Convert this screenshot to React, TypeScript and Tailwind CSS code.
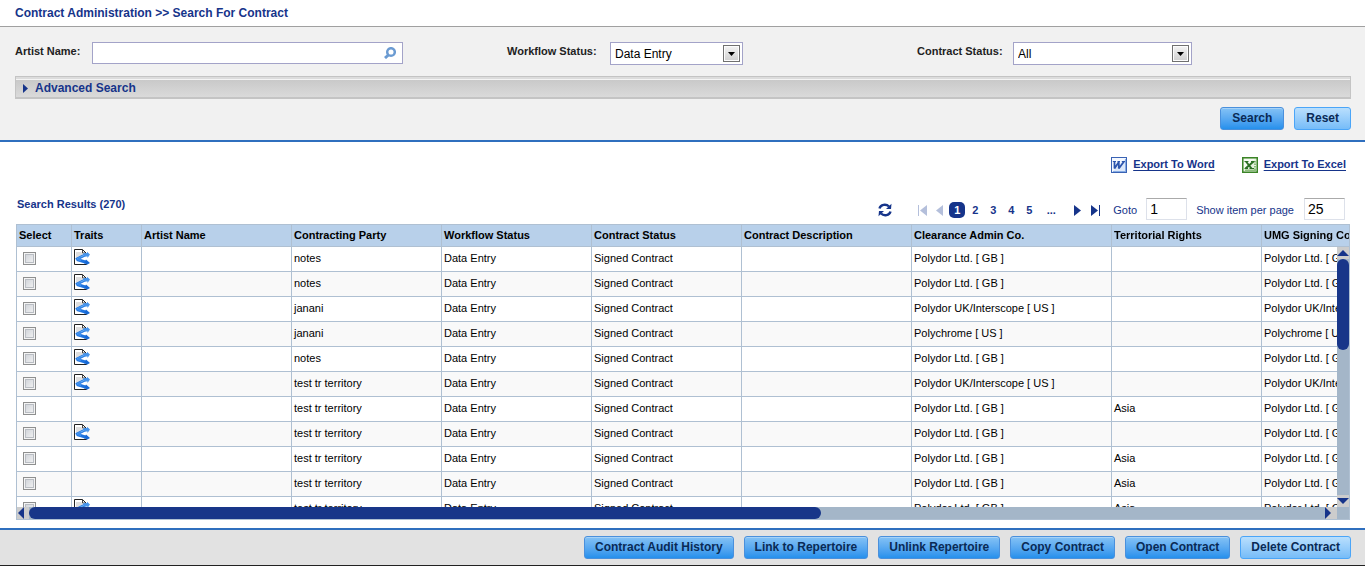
import React from "react";

type Row = {
  traits: boolean;
  party: string;
  admin: string;
  territory: string;
};

const rows: Row[] = [
  { traits: true, party: "notes", admin: "Polydor Ltd. [ GB ]", territory: "" },
  { traits: true, party: "notes", admin: "Polydor Ltd. [ GB ]", territory: "" },
  { traits: true, party: "janani", admin: "Polydor UK/Interscope [ US ]", territory: "" },
  { traits: true, party: "janani", admin: "Polychrome [ US ]", territory: "" },
  { traits: true, party: "notes", admin: "Polydor Ltd. [ GB ]", territory: "" },
  { traits: true, party: "test tr territory", admin: "Polydor UK/Interscope [ US ]", territory: "" },
  { traits: false, party: "test tr territory", admin: "Polydor Ltd. [ GB ]", territory: "Asia" },
  { traits: true, party: "test tr territory", admin: "Polydor Ltd. [ GB ]", territory: "" },
  { traits: false, party: "test tr territory", admin: "Polydor Ltd. [ GB ]", territory: "Asia" },
  { traits: false, party: "test tr territory", admin: "Polydor Ltd. [ GB ]", territory: "Asia" },
  { traits: true, party: "test tr territory", admin: "Polydor Ltd. [ GB ]", territory: "Asia" },
];

const columns = [
  { title: "Select", width: "w-[55px]" },
  { title: "Traits", width: "w-[70px]" },
  { title: "Artist Name", width: "w-[150px]" },
  { title: "Contracting Party", width: "w-[150px]" },
  { title: "Workflow Status", width: "w-[150px]" },
  { title: "Contract Status", width: "w-[150px]" },
  { title: "Contract Description", width: "w-[170px]" },
  { title: "Clearance Admin Co.", width: "w-[200px]" },
  { title: "Territorial Rights", width: "w-[150px]" },
  { title: "UMG Signing Company", width: "w-[200px]" },
];

function TraitsIcon() {
  return (
    <svg width="16" height="16" viewBox="0 0 16 16" className="block">
      <path d="M.5 .5H8.5L12.5 4.5V15.5H.5Z" fill="#fff" />
      <path d="M2 3H7L9 5L2 11Z" fill="#dedede" />
      <path d="M12.5 14V15.5H.5V.5H8.5L12 4" fill="none" stroke="#222" />
      <path d="M8.5 .5V4H11" fill="none" stroke="#444" />
      <path d="M2 10.5L12 5.5M3 10.5L13 13.5" fill="none" stroke="#1e74e0" strokeWidth="3" />
      <path d="M3 10L12 5.3" fill="none" stroke="#67adf3" strokeWidth="1.2" />
      <path d="M9.5 4H13V2.8L16 5.5L13.5 9V7.5H10Z" fill="#4794ea" />
      <path d="M12 10.5L16 14L12.5 16V14.5H10Z" fill="#1668d6" />
      <path d="M1.5 10.5L7 7.5V12.5Z" fill="#3b8cec" />
    </svg>
  );
}

function WordIcon() {
  return (
    <svg width="16" height="16" viewBox="0 0 16 16" className="block">
      <rect x=".5" y=".5" width="15" height="15" fill="#dce8fa" stroke="#3a63b4" />
      <path d="M1 1H15L1 15Z" fill="#f5f9ff" />
      <path d="M14 2H15V15H2V14H14Z" fill="#86abe4" />
      <path d="M3.5 4.5V11.5L7.8 5V11.5L13 4.5" fill="none" stroke="#2c55ad" strokeWidth="1.8" strokeLinejoin="bevel" />
      <path d="M1.8 4.5H5M6.5 4.5H9M10.8 4.5H14" stroke="#2c55ad" strokeWidth="1.2" />
    </svg>
  );
}

function ExcelIcon() {
  return (
    <svg width="16" height="16" viewBox="0 0 16 16" className="block">
      <rect x=".75" y=".75" width="14.5" height="14.5" fill="#e4f0dd" stroke="#3b8427" strokeWidth="1.5" />
      <path d="M2 2H13L2 13Z" fill="#f7fbf4" />
      <path d="M12 4H14V14H3V12.5H12Z" fill="#8dbd7d" />
      <path d="M11.5 6H14M11.5 8.5H14M11.5 11H14" stroke="#e6f2df" />
      <path d="M4 4.5L9.5 11.5M11.5 4.5L3.5 11.5" stroke="#2c6f24" strokeWidth="2" />
      <path d="M2.5 4.5H6.5M9 4.5H12.5M2.5 11.5H6M7.5 11.5H12" stroke="#2c6f24" />
    </svg>
  );
}

function RefreshIcon() {
  return (
    <svg width="14" height="14" viewBox="0 0 14 14" className="block">
      <path d="M1.5 5.5C2.5 1.5 8 .5 11 3.5" fill="none" stroke="#16348a" strokeWidth="2.4" />
      <path d="M13.5 .8L13 6H8Z" fill="#16348a" />
      <path d="M12.5 8.5C11.5 12.5 6 13.5 3 10.5" fill="none" stroke="#16348a" strokeWidth="2.4" />
      <path d="M.5 13.2L1 8H6Z" fill="#16348a" />
    </svg>
  );
}

function Select({ id, value, width }: { id: string; value: string; width: string }) {
  return (
    <div className={"relative h-[23px] " + width}>
      <select
        id={id}
        className="block h-full w-full appearance-none border border-[#a3a3c8] bg-white px-1 text-xs text-black"
      >
        <option>{value}</option>
      </select>
      <span className="pointer-events-none absolute top-[3px] right-[3px] flex h-[17px] w-[17px] items-center justify-center border border-[#707070] bg-linear-to-b from-[#f4f4f4] to-[#cfcfcf] shadow-[inset_0_0_0_1px_#fcfcfc]">
        <svg width="7" height="4" viewBox="0 0 7 4">
          <path d="M0 0H7L3.5 4Z" fill="#000" />
        </svg>
      </span>
    </div>
  );
}

function Button({ children, light, compact }: { children: React.ReactNode; light?: boolean; compact?: boolean }) {
  return (
    <button
      type="button"
      className={
        "h-[23px] rounded-[3px] border pb-px text-xs leading-5 font-bold whitespace-nowrap text-[#0a2a55] " +
        (compact ? "px-[10px] " : "px-[11px] ") +
        (light
          ? "border-[#4aa5f8] bg-linear-to-b from-[#b9dffd] to-[#76bcf8]"
          : "border-[#4a90dc] bg-linear-to-b from-[#84c2f5] to-[#2490ec] shadow-[inset_0_1px_0_#a5d2f8]")
      }
    >
      {children}
    </button>
  );
}

function PageArrow({ label, d, width, off }: { label: string; d: string; width: number; off?: boolean }) {
  return (
    <button type="button" aria-label={label} className={"pt-0.5 " + (off ? "text-[#b4bfdb]" : "text-[#16348a]")}>
      <svg width={width} height="11" viewBox={"0 0 " + width + " 11"} className="block">
        <path d={d} fill="currentColor" />
      </svg>
    </button>
  );
}

const cell = "h-[25px] overflow-hidden border-r border-b border-[#afc0d2] px-0.5 whitespace-nowrap";

export default function App() {
  return (
    <div className="bg-white font-['Liberation_Sans',Arial,sans-serif] text-[11px] leading-4 text-black">
      <header className="flex h-[27px] items-center border-b border-[#a0a0a0] px-[15px] text-xs font-bold text-[#16348a]">
        <h1>Contract Administration &gt;&gt; Search For Contract</h1>
      </header>

      <form className="border-b-2 border-[#2f6fbe] bg-[#f1f1f1] pt-[15px] pr-[14px] pb-[10px] pl-[15px]" onSubmit={(e) => e.preventDefault()}>
        <div className="grid grid-cols-[492fr_410fr_434fr] font-bold text-[#222]">
          <div className="flex">
            <label htmlFor="artist" className="w-[77px] pt-px">Artist Name:</label>
            <div className="relative">
              <input
                id="artist"
                type="text"
                className="block h-[22px] w-[311px] border border-[#a3a3c8] bg-white pr-6 pl-1 text-xs font-normal"
              />
              <svg width="12" height="12" viewBox="0 0 12 12" className="pointer-events-none absolute top-[5px] right-[7px]">
                <circle cx="7" cy="5" r="3.8" fill="#fff" stroke="#6b9bd2" strokeWidth="2.5" />
                <path d="M4.4 8L1 11" stroke="#6b9bd2" strokeWidth="3" />
              </svg>
            </div>
          </div>
          <div className="flex">
            <label htmlFor="workflow" className="w-[103px] pt-px">Workflow Status:</label>
            <div className="font-normal"><Select id="workflow" value="Data Entry" width="w-[133px]" /></div>
          </div>
          <div className="flex">
            <label htmlFor="contract" className="w-[96px] pt-px">Contract Status:</label>
            <div className="font-normal"><Select id="contract" value="All" width="w-[179px]" /></div>
          </div>
        </div>

        <button
          type="button"
          className="mt-[11px] flex h-[23px] w-full items-center gap-[7px] border border-b-2 border-[#c4c4c4] bg-linear-to-b from-[#c6c6c6] to-[#dadada] px-[7px] pt-0.5 text-xs font-bold text-[#16348a] shadow-[inset_0_2px_0_#dcdcdc,inset_0_3px_0_#f4f4f4]"
        >
          <svg width="5" height="9" viewBox="0 0 5 9">
            <path d="M0 0L5 4.5L0 9Z" fill="#16348a" />
          </svg>
          Advanced Search
        </button>

        <div className="mt-2 flex justify-end gap-[10px]">
          <Button>Search</Button>
          <Button light>Reset</Button>
        </div>
      </form>

      <main className="pt-[15px] pr-[14px] pb-2 pl-[15px]">
        <div className="flex h-4 justify-end gap-[27px] pr-[5px] leading-[14px] font-bold text-[#16348a]">
          <a href="#word" className="flex gap-[6px] underline underline-offset-2"><WordIcon />Export To Word</a>
          <a href="#excel" className="flex gap-[6px] underline underline-offset-2"><ExcelIcon />Export To Excel</a>
        </div>

        <div className="mt-[23px] flex h-7 items-start justify-between text-[#16348a]">
          <h2 className="pl-0.5 font-bold">Search Results (270)</h2>
          <nav aria-label="Pagination" className="flex items-center pt-0.5 pr-[6px]">
            <button type="button" aria-label="Refresh" className="mr-[26px] pt-0.5"><RefreshIcon /></button>
            <PageArrow label="First page" off width={9} d="M0 0H1V11H0ZM9 0V11L2 5.5Z" />
            <span className="w-[9px]" />
            <PageArrow label="Previous page" off width={7} d="M7 0V11L0 5.5Z" />
            <div className="ml-[6px] flex gap-[2px] pt-0.5 font-bold">
              <button type="button" className="h-4 w-4 rounded-[5px] bg-[#16348a] text-white">1</button>
              <button type="button" className="w-4">2</button>
              <button type="button" className="w-4">3</button>
              <button type="button" className="w-4">4</button>
              <button type="button" className="w-4">5</button>
              <button type="button" className="ml-1 w-4">...</button>
            </div>
            <div className="mr-[13px] ml-[15px] flex gap-[10px]">
              <PageArrow label="Next page" width={7} d="M0 0V11L7 5.5Z" />
              <PageArrow label="Last page" width={9} d="M8 0H9V11H8ZM0 0V11L7 5.5Z" />
            </div>
            <label htmlFor="goto" className="mr-[9px] pt-0.5">Goto</label>
            <input id="goto" type="text" defaultValue="1" className="h-[22px] w-[41px] border border-[#dde1ea] border-t-[#aaa] px-[3px] text-sm text-black" />
            <label htmlFor="per-page" className="mr-[10px] ml-[9px] pt-0.5">Show item per page</label>
            <input id="per-page" type="text" defaultValue="25" className="h-[22px] w-[41px] border border-[#dde1ea] border-t-[#aaa] px-[3px] text-sm text-black" />
          </nav>
        </div>

        <div className="relative mr-px ml-px border border-[#afc0d2]">
          <div className="h-[294px] overflow-auto [scrollbar-width:none]">
            <table className="w-[1445px] table-fixed border-separate border-spacing-0">
              <thead>
                <tr className="sticky top-0 bg-[#b8d0ea]">
                  {columns.map((c) => (
                    <th key={c.title} scope="col" className={"h-[22px] overflow-hidden border-r border-b border-[#afc0d2] px-0.5 pb-0.5 text-left font-bold whitespace-nowrap " + c.width}>
                      {c.title}
                    </th>
                  ))}
                </tr>
              </thead>
              <tbody>
                {rows.map((r, i) => (
                  <tr key={i} className="odd:bg-white even:bg-[#f9f9f9]">
                    <td className={cell + " pb-0.5"}>
                      <input
                        type="checkbox"
                        aria-label={"Select contract " + (i + 1)}
                        className="ml-1 block h-[13px] w-[13px] appearance-none border border-[#8e8f8f] bg-linear-to-br from-[#cbcfd5] to-[#f6f6f6] shadow-[inset_0_0_0_1px_#f4f4f4,inset_0_0_0_2px_#b9bdc3]"
                      />
                    </td>
                    <td className={cell + " pb-1"}>{r.traits && <TraitsIcon />}</td>
                    <td className={cell} />
                    <td className={cell + " pb-0.5"}>{r.party}</td>
                    <td className={cell + " pb-0.5"}>Data Entry</td>
                    <td className={cell + " pb-0.5"}>Signed Contract</td>
                    <td className={cell} />
                    <td className={cell + " pb-0.5"}>{r.admin}</td>
                    <td className={cell + " pb-0.5"}>{r.territory}</td>
                    <td className={cell + " pb-0.5"}>{r.admin}</td>
                  </tr>
                ))}
              </tbody>
            </table>
          </div>

          {/* Custom scrollbars laid over the grid */}
          <div className="absolute top-[22px] right-0 bottom-[12px] flex w-3 flex-col bg-[#a4b6c8]">
            <div className="flex h-3 items-center justify-center bg-[#cccccc]">
              <svg width="12" height="6" viewBox="0 0 12 6"><path d="M0 6L6 0L12 6Z" fill="#16348a" /></svg>
            </div>
            <div className="h-[91px] rounded-md bg-[#183689]" />
            <div className="mt-auto flex h-3 items-start justify-center bg-[#cccccc] pt-[3px]">
              <svg width="12" height="6" viewBox="0 0 12 6"><path d="M0 0L6 6L12 0Z" fill="#16348a" /></svg>
            </div>
          </div>
          <div className="absolute right-0 bottom-0 left-0 flex h-3 bg-[#a4b6c8] pr-3">
            <div className="flex w-3 items-center bg-[#cccccc] pl-px">
              <svg width="6" height="12" viewBox="0 0 6 12"><path d="M6 0L0 6L6 12Z" fill="#16348a" /></svg>
            </div>
            <div className="w-[60%] rounded-md bg-[#183689]" />
            <div className="ml-auto flex w-3 items-center bg-[#cccccc]">
              <svg width="6" height="12" viewBox="0 0 6 12"><path d="M0 0L6 6L0 12Z" fill="#16348a" /></svg>
            </div>
          </div>
        </div>
      </main>

      <footer className="flex justify-end gap-[10px] border-t-2 border-b border-t-[#2f6fbe] border-b-[#222] bg-[#e2e2e2] px-[14px] py-[6px]">
        <Button compact>Contract Audit History</Button>
        <Button compact>Link to Repertoire</Button>
        <Button compact>Unlink Repertoire</Button>
        <Button compact>Copy Contract</Button>
        <Button compact>Open Contract</Button>
        <Button compact light>Delete Contract</Button>
      </footer>
    </div>
  );
}
